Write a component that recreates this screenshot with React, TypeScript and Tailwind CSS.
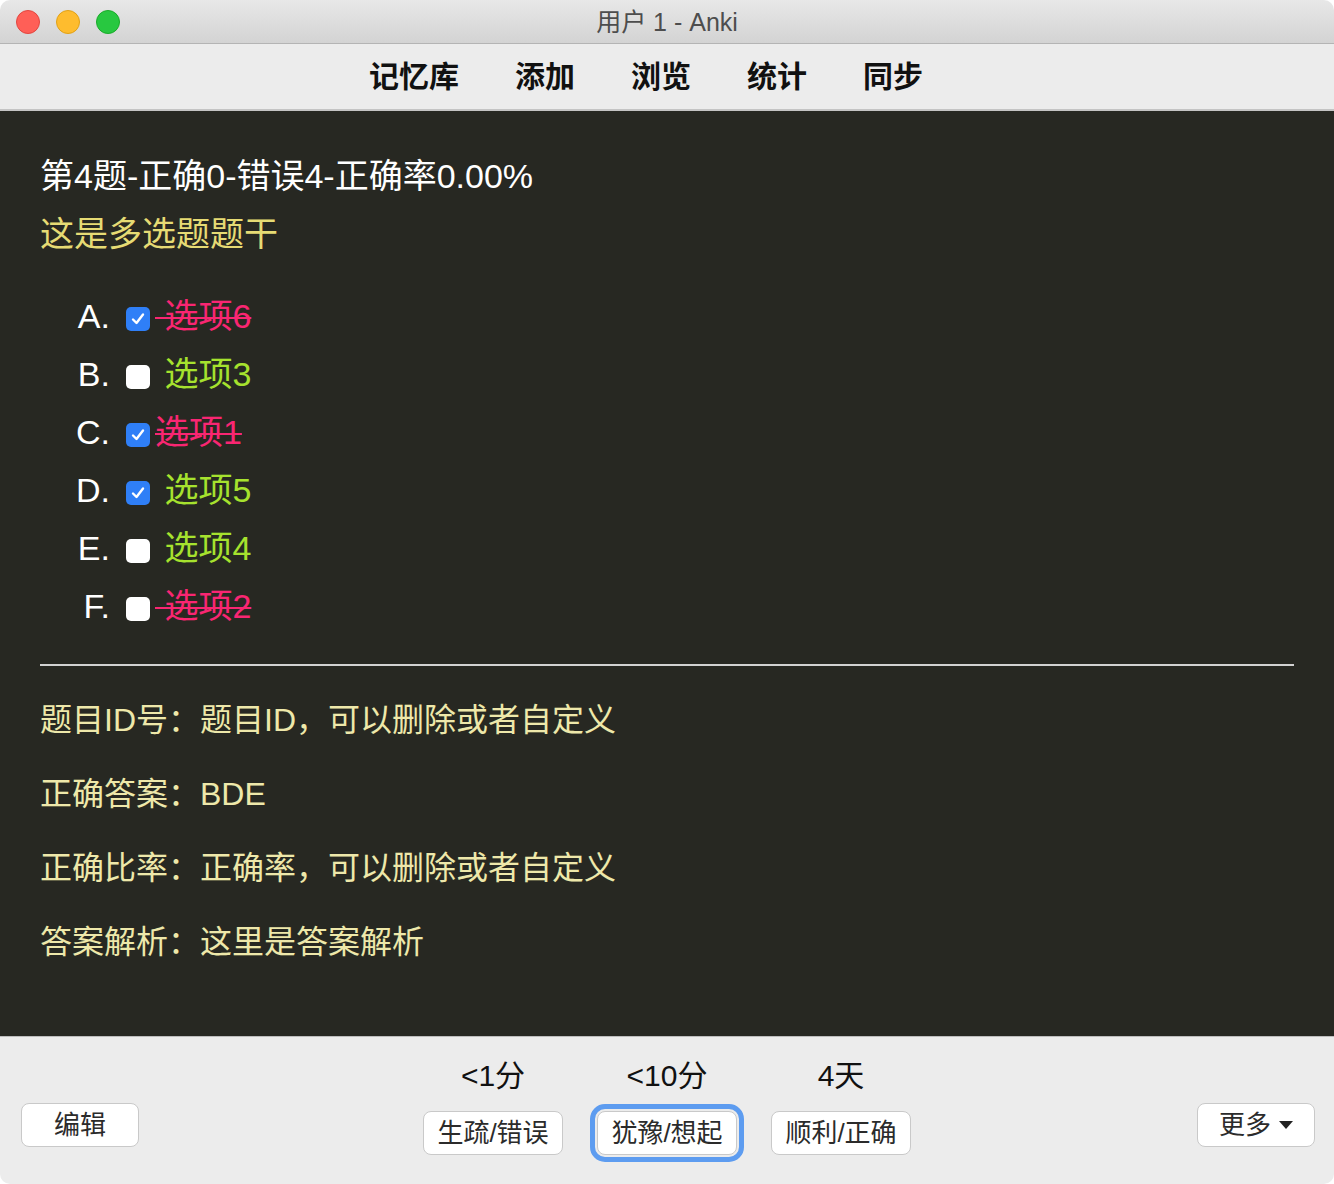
import React from "react";

const options = [
  { letter: "A", checked: true, text: " 选项6", wrong: true },
  { letter: "B", checked: false, text: " 选项3", wrong: false },
  { letter: "C", checked: true, text: "选项1", wrong: true },
  { letter: "D", checked: true, text: " 选项5", wrong: false },
  { letter: "E", checked: false, text: " 选项4", wrong: false },
  { letter: "F", checked: false, text: " 选项2", wrong: true },
];

const fields = [
  { label: "题目ID号：", value: "题目ID，可以删除或者自定义" },
  { label: "正确答案：", value: "BDE" },
  { label: "正确比率：", value: "正确率，可以删除或者自定义" },
  { label: "答案解析：", value: "这里是答案解析" },
];

const answers = [
  { time: "<1分", label: "生疏/错误", focus: false },
  { time: "<10分", label: "犹豫/想起", focus: true },
  { time: "4天", label: "顺利/正确", focus: false },
];

const Checkbox = ({ checked }: { checked: boolean }) =>
  checked ? (
    <span className="mt-[6px] flex h-[24px] w-[24px] shrink-0 items-center justify-center rounded-[5px] bg-[#2f7ff7]">
      <svg width="20" height="20" viewBox="0 0 20 20" fill="none">
        <path d="M5 10.5 L8.5 14 L15 5.5" stroke="white" strokeWidth="2.4" strokeLinecap="round" strokeLinejoin="round" />
      </svg>
    </span>
  ) : (
    <span className="mt-[6px] h-[24px] w-[24px] shrink-0 rounded-[5px] bg-white" />
  );

const App = () => {
  return (
    <div className="h-[1184px] w-[1334px] bg-white font-['Liberation_Sans','Noto_Sans_CJK_SC',sans-serif]">
      <div className="flex h-full flex-col overflow-hidden rounded-[10px]">
        {/* title bar */}
        <div className="relative flex h-[44px] shrink-0 items-center justify-center border-b border-[#b4b4b4] bg-gradient-to-b from-[#e8e8e8] to-[#d3d3d3]">
          <div className="absolute left-[16px] top-[10px] flex gap-[16px]">
            <span className="h-[24px] w-[24px] rounded-full border border-[#e2463f] bg-[#ff5f57]" />
            <span className="h-[24px] w-[24px] rounded-full border border-[#e1a116] bg-[#febc2e]" />
            <span className="h-[24px] w-[24px] rounded-full border border-[#1aab29] bg-[#28c840]" />
          </div>
          <span className="pt-[2px] text-[25px] leading-none text-[#4d4d4d]">用户 1 - Anki</span>
        </div>

        {/* toolbar */}
        <div className="flex h-[67px] shrink-0 items-center justify-center gap-[56px] border-b-2 border-[#c4c4c4] bg-[#ececec] pr-[42px] text-[30px] font-bold leading-none text-[#111]">
          <span>记忆库</span>
          <span>添加</span>
          <span>浏览</span>
          <span>统计</span>
          <span>同步</span>
        </div>

        {/* card */}
        <div className="flex-1 bg-[#272822] px-[40px] pt-[36px]">
          <div className="text-[34px] leading-[58px] text-white">第4题-正确0-错误4-正确率0.00%</div>
          <div className="text-[34px] leading-[58px] text-[#e6db74]">这是多选题题干</div>

          <div className="mt-[24px] flex flex-col">
            {options.map((o) => (
              <div key={o.letter} className="flex h-[58px] items-center">
                <span className="w-[70px] text-right text-[34px] text-white">{o.letter}.</span>
                <span className="ml-[16px] flex items-center">
                  <Checkbox checked={o.checked} />
                </span>
                <span
                  className={
                    o.wrong
                      ? "ml-[5px] whitespace-pre text-[34px] text-[#f92672] line-through decoration-2"
                      : "ml-[5px] whitespace-pre text-[34px] text-[#a6e22e]"
                  }
                >
                  {o.text}
                </span>
              </div>
            ))}
          </div>

          <hr className="mt-[29px] border-0 border-t-2 border-[#d2d2d2]" />

          <div className="mt-[17px] flex flex-col">
            {fields.map((f) => (
              <div key={f.label} className="text-[32px] leading-[74px] text-[#eee8aa]">
                {f.label}
                {f.value}
              </div>
            ))}
          </div>
        </div>

        {/* bottom bar */}
        <div className="grid h-[148px] shrink-0 grid-cols-[1fr_auto_1fr] border-t border-[#bdbdbd] bg-[#ececec] px-[21px]">
          <div className="pt-[66px]">
            <button className="h-[44px] w-[118px] rounded-[8px] border border-[#c9c9c9] bg-white text-[26px] leading-none text-[#2b2b2b]">
              编辑
            </button>
          </div>

          <div className="flex gap-[34px] pt-[21px]">
            {answers.map((a) => (
              <div key={a.label} className="flex w-[140px] flex-col items-center">
                <span className="text-[30px] leading-[36px] text-[#111]">{a.time}</span>
                <button
                  className={
                    a.focus
                      ? "mt-[17px] h-[44px] w-[140px] rounded-[8px] border border-[#c9c9c9] bg-white text-[26px] leading-none text-[#2b2b2b] outline-[5px] outline-offset-[2px] outline-[#5d9cf0] outline-solid"
                      : "mt-[17px] h-[44px] w-[140px] rounded-[8px] border border-[#c9c9c9] bg-white text-[26px] leading-none text-[#2b2b2b]"
                  }
                >
                  {a.label}
                </button>
              </div>
            ))}
          </div>

          <div className="-mr-[2px] flex justify-end pt-[66px]">
            <button className="flex h-[44px] w-[118px] items-center justify-center gap-[8px] rounded-[8px] border border-[#c9c9c9] bg-white text-[26px] leading-none text-[#2b2b2b]">
              <span>更多</span>
              <svg width="14" height="8" viewBox="0 0 14 8">
                <path d="M0 0 H14 L7 8 Z" fill="#222" />
              </svg>
            </button>
          </div>
        </div>
      </div>
    </div>
  );
};

export default App;
